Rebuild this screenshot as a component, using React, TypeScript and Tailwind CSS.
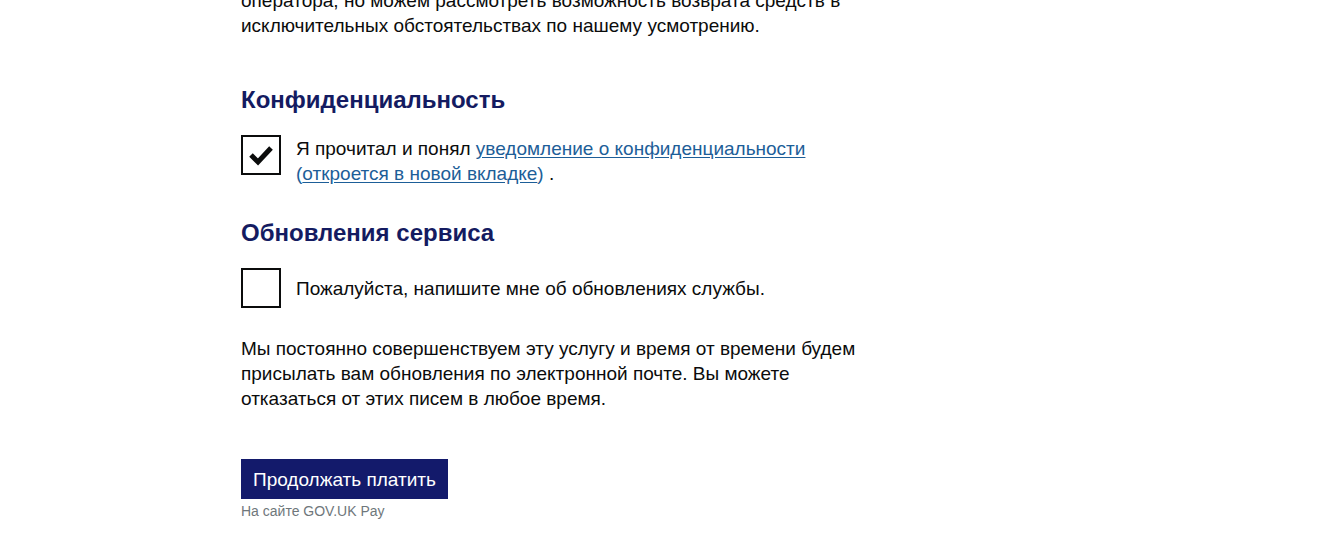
import React from 'react';

const font = { fontFamily: '"Liberation Sans", Arial, sans-serif' };

const Checkbox: React.FC<{ checked?: boolean }> = ({ checked = false }) => (
  <div className="w-10 h-10 shrink-0 border-2 border-[#0b0c0c] bg-white flex items-center justify-center">
    {checked && (
      <svg width="26" height="22" viewBox="0 0 26 22">
        <path d="M3 11 L10 18 L23 4" fill="none" stroke="#0b0c0c" strokeWidth="5" />
      </svg>
    )}
  </div>
);

const App: React.FC = () => {
  return (
    <div className="w-[1323px] h-[542px] overflow-hidden bg-white text-[#0b0c0c]" style={font}>
      <div className="pl-[241px] w-[881px]">
        <p className="-mt-[12px] text-[19px] leading-[25px]">
          оператора, но можем рассмотреть возможность возврата средств в исключительных обстоятельствах по нашему усмотрению.
        </p>

        <h2 className="mt-[47px] text-[24px] leading-[30px] font-bold text-[#141b61]">
          Конфиденциальность
        </h2>
        <div className="mt-[20px] flex items-start gap-[15px]">
          <Checkbox checked />
          <label className="text-[19px] leading-[25px] pt-[1px]">
            Я прочитал и понял{' '}
            <a href="#" className="text-[#1d5e98] underline underline-offset-2">
              уведомление о конфиденциальности
            </a>{' '}
            <span className="text-[#1d5e98]">(</span>
            <a href="#" className="text-[#1d5e98] underline underline-offset-2">
              откроется в новой вкладке
            </a>
            <span className="text-[#1d5e98]">)</span> .
          </label>
        </div>

        <h2 className="mt-[32px] text-[24px] leading-[30px] font-bold text-[#141b61]">
          Обновления сервиса
        </h2>
        <div className="mt-[20px] flex items-center gap-[15px]">
          <Checkbox />
          <label className="text-[19px] leading-[25px]">
            Пожалуйста, напишите мне об обновлениях службы.
          </label>
        </div>

        <p className="mt-[28px] text-[19px] leading-[25px] w-[640px]">
          Мы постоянно совершенствуем эту услугу и время от времени будем присылать вам обновления по электронной почте. Вы можете отказаться от этих писем в любое время.
        </p>

        <button className="mt-[48px] h-10 px-[12px] bg-[#131a6b] text-white text-[19px] leading-[25px] block">
          Продолжать платить
        </button>
        <p className="mt-[2px] text-[14px] leading-[20px] text-[#6f777b]">На сайте GOV.UK Pay</p>
      </div>
    </div>
  );
};

export default App;
